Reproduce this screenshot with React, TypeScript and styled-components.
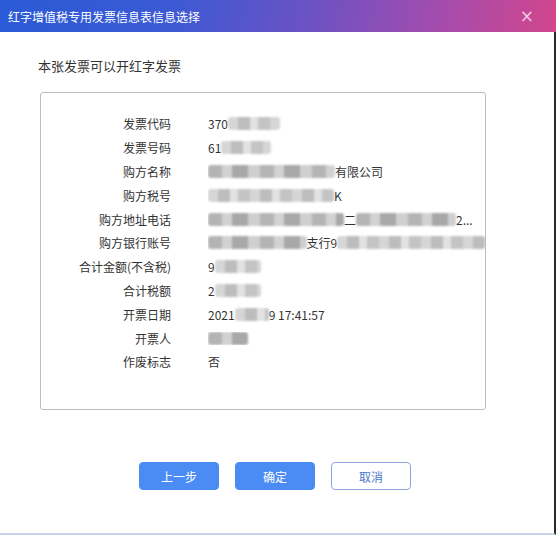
import styled, { createGlobalStyle } from "styled-components";

const GlobalStyle = createGlobalStyle`
  html, body {
    margin: 0;
    padding: 0;
    background: #ffffff;
  }
  body {
    font-family: "Microsoft YaHei", "Noto Sans CJK SC", "Noto Sans", sans-serif;
  }
`;

type Piece = { t?: string; w?: number; shade?: number };

const rows: { label: string; value: Piece[] }[] = [
  { label: "发票代码", value: [{ t: "370" }, { w: 52, shade: 1 }] },
  { label: "发票号码", value: [{ t: "61" }, { w: 50, shade: 1 }] },
  { label: "购方名称", value: [{ w: 127, shade: 2 }, { t: "有限公司" }] },
  { label: "购方税号", value: [{ w: 126, shade: 1 }, { t: "K" }] },
  {
    label: "购方地址电话",
    value: [{ w: 136, shade: 2 }, { t: "二" }, { w: 100, shade: 2 }, { t: "2..." }],
  },
  {
    label: "购方银行账号",
    value: [{ w: 100, shade: 2 }, { t: "支行9" }, { w: 150, shade: 1 }],
  },
  { label: "合计金额(不含税)", value: [{ t: "9" }, { w: 46, shade: 1 }] },
  { label: "合计税额", value: [{ t: "2" }, { w: 46, shade: 1 }] },
  { label: "开票日期", value: [{ t: "2021" }, { w: 34, shade: 1 }, { t: "9 17:41:57" }] },
  { label: "开票人", value: [{ w: 40, shade: 2 }] },
  { label: "作废标志", value: [{ t: "否" }] },
];

export default function App() {
  return (
    <>
      <GlobalStyle />
      <Dialog>
        <TitleBar>
          <Title>红字增值税专用发票信息表信息选择</Title>
          <Close>×</Close>
        </TitleBar>
        <Body>
          <Notice>本张发票可以开红字发票</Notice>
          <InfoBox>
            {rows.map((row) => (
              <Row key={row.label}>
                <Label>{row.label}</Label>
                <Value>
                  {row.value.map((p, i) =>
                    p.t ? (
                      <span key={i}>{p.t}</span>
                    ) : (
                      <Blur key={i} $w={p.w || 40} $shade={p.shade || 1} />
                    )
                  )}
                </Value>
              </Row>
            ))}
          </InfoBox>
          <Buttons>
            <Btn $primary>上一步</Btn>
            <Btn $primary>确定</Btn>
            <Btn>取消</Btn>
          </Buttons>
        </Body>
      </Dialog>
    </>
  );
}

const Dialog = styled.div`
  width: 556px;
  height: 535px;
  box-sizing: border-box;
  display: flex;
  flex-direction: column;
  background: #fff;
  border-right: 2px solid #2a2a2a;
  border-bottom: 2px solid #c8d4ea;
`;

const TitleBar = styled.div`
  height: 32px;
  flex-shrink: 0;
  margin-right: -2px;
  display: flex;
  align-items: center;
  justify-content: space-between;
  padding: 0 22px 0 8px;
  background: linear-gradient(
    100deg,
    #2a5ad6 0%,
    #3b5ad4 30%,
    #6a52c4 55%,
    #a24cae 78%,
    #d2468c 100%
  );
`;

const Title = styled.div`
  color: #fff;
  font-size: 12px;
`;

const Close = styled.div`
  color: #f1c9de;
  font-family: "DejaVu Sans", sans-serif;
  font-size: 17px;
  line-height: 1;
`;

const Body = styled.div`
  display: flex;
  flex-direction: column;
  padding: 0 0 0 40px;
`;

const Notice = styled.div`
  margin: 25px 0 0 -2px;
  font-size: 13px;
  color: #333;
  line-height: 18px;
`;

const InfoBox = styled.div`
  margin-top: 17px;
  width: 446px;
  height: 318px;
  box-sizing: border-box;
  border: 1px solid #bdbdbd;
  border-radius: 3px;
  padding: 19px 0 0;
  display: flex;
  flex-direction: column;
`;

const Row = styled.div`
  display: grid;
  grid-template-columns: 130px 1fr;
  column-gap: 37px;
  height: 23.8px;
  align-items: center;
  font-size: 12px;
  color: #333;
`;

const Label = styled.div`
  text-align: right;
  white-space: nowrap;
`;

const Value = styled.div`
  display: flex;
  align-items: center;
  white-space: nowrap;
  overflow: hidden;
`;

const Blur = styled.span<{ $w: number; $shade: number }>`
  display: inline-block;
  width: ${(p) => p.$w}px;
  height: 13px;
  background: ${(p) =>
    p.$shade === 2
      ? "repeating-linear-gradient(90deg, #b4b4b4 0 14px, #d2d2d2 14px 24px, #a8a8a8 24px 40px, #cfcfcf 40px 52px)"
      : "repeating-linear-gradient(90deg, #d6d6d6 0 10px, #bdbdbd 10px 22px, #e2e2e2 22px 30px, #c4c4c4 30px 42px)"};
  filter: blur(1.2px);
  border-radius: 3px;
`;

const Buttons = styled.div`
  display: flex;
  gap: 16px;
  margin: 52px 0 0 99px;
`;

const Btn = styled.div<{ $primary?: boolean }>`
  width: 80px;
  height: 28px;
  box-sizing: border-box;
  border-radius: 4px;
  display: flex;
  align-items: center;
  justify-content: center;
  font-size: 12px;
  background: ${(p) => (p.$primary ? "#4b8bf4" : "#fff")};
  color: ${(p) => (p.$primary ? "#fff" : "#4a78cf")};
  border: 1px solid ${(p) => (p.$primary ? "#4b8bf4" : "#8ea6d6")};
`;
